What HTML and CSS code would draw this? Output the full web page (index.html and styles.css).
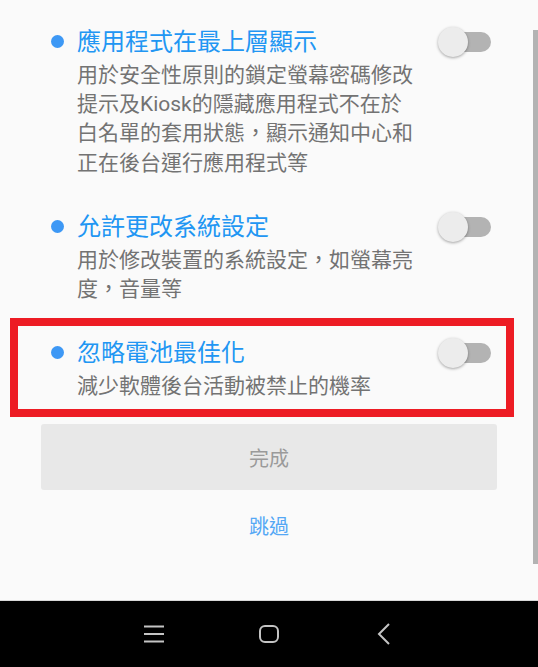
FILE: index.html
```html
<!DOCTYPE html>
<html lang="zh-Hant">
<head>
    <meta charset="UTF-8">
    <meta name="viewport" content="width=device-width, initial-scale=1.0">
    <title>權限設定</title>
    <link rel="stylesheet" href="styles.css">
</head>
<body>
    <div class="screen">
        <div class="content">
            <ul class="perm-list">
                <li class="perm">
                    <span class="dot"></span>
                    <div class="perm-text">
                        <div class="perm-title">應用程式在最上層顯示</div>
                        <div class="perm-desc">用於安全性原則的鎖定螢幕密碼修改提示及Kiosk的隱藏應用程式不在於白名單的套用狀態，顯示通知中心和正在後台運行應用程式等</div>
                    </div>
                    <span class="switch"><span class="track"></span><span class="thumb"></span></span>
                </li>
                <li class="perm">
                    <span class="dot"></span>
                    <div class="perm-text">
                        <div class="perm-title">允許更改系統設定</div>
                        <div class="perm-desc">用於修改裝置的系統設定，如螢幕亮度，音量等</div>
                    </div>
                    <span class="switch"><span class="track"></span><span class="thumb"></span></span>
                </li>
                <!-- 紅框標示 -->
                <li class="perm marked">
                    <span class="dot"></span>
                    <div class="perm-text">
                        <div class="perm-title">忽略電池最佳化</div>
                        <div class="perm-desc">減少軟體後台活動被禁止的機率</div>
                    </div>
                    <span class="switch"><span class="track"></span><span class="thumb"></span></span>
                </li>
            </ul>
            <button class="done" type="button">完成</button>
            <a class="skip">跳過</a>
        </div>
        <div class="scrollbar"></div>
        <div class="navbar">
            <span class="nav-btn">
                <svg width="22" height="20" viewBox="0 0 22 20"><path d="M1 2.5h20M1 10h20M1 17.5h20" stroke="#c4c4c4" stroke-width="2" fill="none"/></svg>
            </span>
            <span class="nav-btn">
                <svg width="22" height="20" viewBox="0 0 22 20"><rect x="2" y="2" width="18" height="16" rx="5" stroke="#c4c4c4" stroke-width="2" fill="none"/></svg>
            </span>
            <span class="nav-btn">
                <svg width="14" height="22" viewBox="0 0 14 22"><path d="M12 1L2 11l10 10" stroke="#c4c4c4" stroke-width="2" fill="none"/></svg>
            </span>
        </div>
    </div>
</body>
</html>
```

FILE: styles.css
```css
*{
    box-sizing:border-box;
}
body{
    margin:0;
    background-color:#fafafa;
    font-family:Roboto, "Noto Sans CJK TC", sans-serif;
}
.screen{
    position:relative;
    width:538px;
    height:667px;
    overflow:hidden;
}
.content{
    height:600px;
    display:flex;
    flex-direction:column;
    align-items:center;
}
.perm-list{
    list-style:none;
    margin:0;
    padding:15px 32px 0 18px;
    width:100%;
    display:flex;
    flex-direction:column;
    gap:14px;
}
.perm{
    display:flex;
    align-items:flex-start;
    padding:8px 15px 8px 33px;
}
/* 截圖上的紅框 */
.perm.marked{
    outline:8px solid #ed1c24;
}
.dot{
    flex:none;
    width:13px;
    height:13px;
    margin-top:12px;
    border-radius:50%;
    background-color:#3d98f5;
}
.perm-text{
    width:340px;
    margin-left:13px;
}
.perm-title{
    font-size:24px;
    line-height:38px;
    color:#2196f3;
}
.perm-desc{
    font-size:21px;
    line-height:29.2px;
    color:#737373;
}
.switch{
    position:relative;
    flex:none;
    width:53px;
    height:30px;
    margin-top:4px;
    margin-left:auto;
}
.track{
    position:absolute;
    right:0;
    top:5px;
    width:48px;
    height:20px;
    border-radius:10px;
    background-color:#b3b3b3;
}
.thumb{
    position:absolute;
    left:0;
    top:0;
    width:30px;
    height:30px;
    border-radius:50%;
    background-color:#ececec;
    box-shadow:0 1px 3px rgba(0,0,0,0.35);
}
.done{
    width:456px;
    height:66px;
    margin-top:15px;
    border:0;
    border-radius:3px;
    background-color:#e8e8e8;
    color:#9a9a9a;
    font-family:inherit;
    font-size:20px;
}
.skip{
    margin-top:17px;
    font-size:20px;
    line-height:40px;
    color:#55a8f5;
}
.scrollbar{
    position:absolute;
    right:0;
    top:30px;
    width:5px;
    height:534px;
    background-color:#b3b3b3;
}
.navbar{
    height:67px;
    border-top:1px solid #d8d8d8;
    background-color:#000;
    display:flex;
    justify-content:center;
    align-items:center;
    gap:75px;
}
.nav-btn{
    width:40px;
    display:flex;
    justify-content:center;
}
```
